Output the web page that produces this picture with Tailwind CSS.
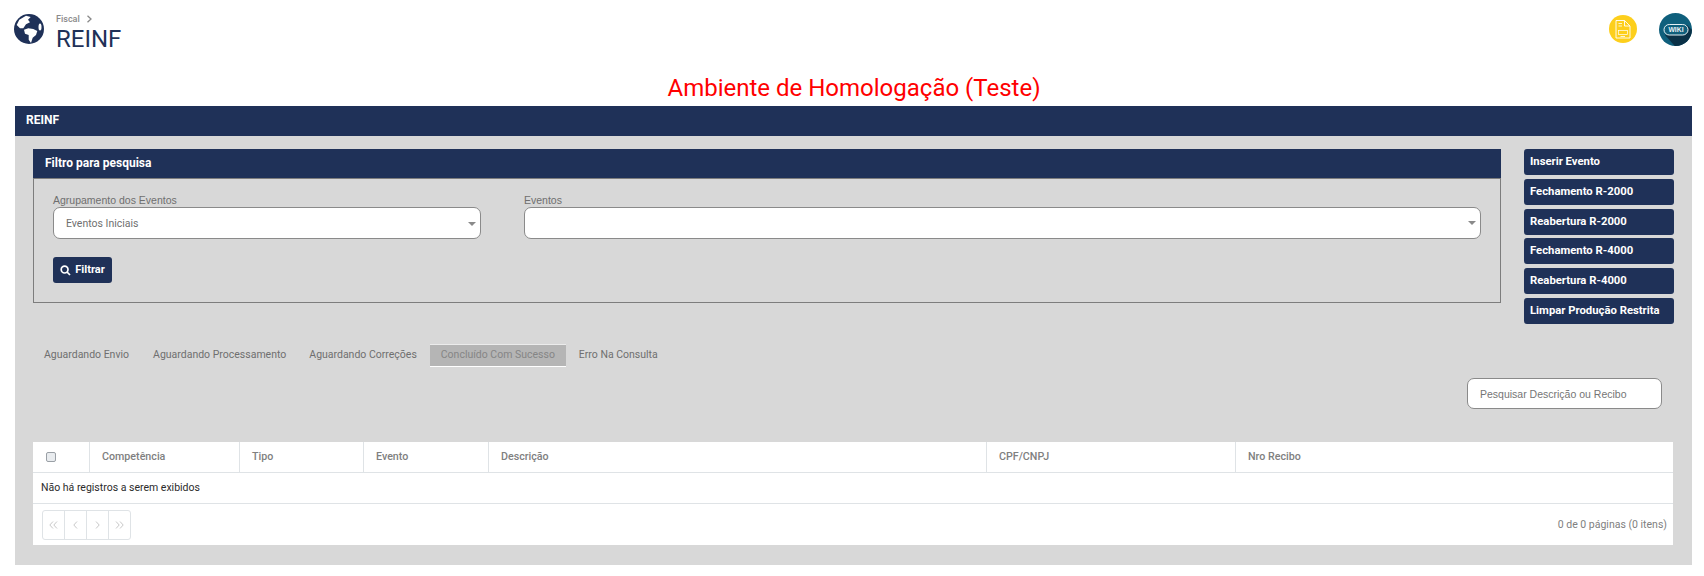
<!DOCTYPE html>
<html lang="pt-BR">
<head>
    <meta charset="UTF-8">
    <title>REINF</title>
    <script src="https://cdn.jsdelivr.net/npm/@tailwindcss/browser@4"></script>
</head>
<body class="bg-white font-['Roboto',sans-serif] h-[576px] overflow-hidden">
    <!-- topo -->
    <header class="h-[72px] flex justify-between pl-[14px] pr-[12px]">
        <div class="flex pt-[14px]">
            <svg class="w-[30px] h-[30px]" viewBox="0 0 30 30">
                <circle cx="15" cy="15" r="15" fill="#1f3158"/>
                <path d="M2.700 11 5.300 5.700 12 1.700 16.700 3 14 5.700 16 8.300 12 10.300 9.300 14.300 6 14.300Z" fill="#fff"/>
                <path d="M10 15.700 14.300 14.300 19.300 15 23.300 17 22 21 18.700 23.700 17 29 14.700 25.700 14.700 21 11 19.700Z" fill="#fff"/>
                <ellipse cx="26" cy="13" rx="1.500" ry="3.500" fill="#fff"/>
            </svg>
            <div class="ml-[12px] -mt-[2px]">
                <div class="flex items-center text-[9px] leading-[14px] text-[#8a8a8a] font-medium">Fiscal
                    <svg class="w-[7px] h-[8px] ml-[6px]" viewBox="0 0 7 8" fill="none" stroke="#8a8a8a" stroke-width="1.3"><path d="M1.5 .8 5 4 1.5 7.2"/></svg>
                </div>
                <h1 class="text-[24px] leading-[26px] text-[#1f3158]">REINF</h1>
            </div>
        </div>
        <div class="flex items-start pt-[15px] gap-[22px]">
            <svg class="w-[28px] h-[28px]" viewBox="0 0 28 28">
                <circle cx="14" cy="14" r="14" fill="#fdcf1c"/>
                <path d="M7 5.500H15.500L21 11V23H7ZM15.500 5.500V11H21" fill="none" stroke="#fff" stroke-width=".9"/>
                <rect x="9.500" y="15.500" width="9" height="4" fill="none" stroke="#fff" stroke-width=".7"/>
                <path d="M9.500 8.500H13M9.500 11H13M11.500 21.500H16" stroke="#fff" stroke-width=".8"/>
            </svg>
            <svg class="w-[33px] h-[33px] -mt-[2px]" viewBox="0 0 33 33">
                <clipPath id="wikiClip"><circle cx="16.500" cy="16.500" r="16.500"/></clipPath>
                <circle cx="16.500" cy="16.500" r="16.500" fill="#0f5f7c"/>
                <path d="M6 22 28 12 40 24 22 40Z" fill="#0a3147" clip-path="url(#wikiClip)"/>
                <rect x="5" y="11.500" width="24" height="10.500" rx="5.250" fill="#0f5f7c" stroke="#e6f0f4" stroke-width="1"/>
                <text x="17" y="19.200" text-anchor="middle" font-family="Liberation Sans" font-weight="700" font-size="6.800" fill="#e6f0f4">WIKI</text>
            </svg>
        </div>
    </header>

    <div class="h-[34px] pl-[4px] text-center text-[24px] leading-[32px] text-[#ff0000]">Ambiente de Homologação (Teste)</div>

    <main class="ml-[15px] mr-[12px] h-[459px] bg-[#d8d8d8]">
        <div class="h-[30px] bg-[#1f3158] pl-[11px] text-white text-[12px] font-bold leading-[29px]">REINF</div>

        <div class="flex pl-[18px] pr-[18px] pt-[13px]">
            <section class="w-[1468px] h-[154px] border border-t-0 border-[#7d7d7d]">
                <div class="h-[30px] -mx-px bg-[#1f3158] border-b border-[#7d7d7d] pl-[12px] text-white text-[12px] font-bold leading-[29px]">Filtro para pesquisa</div>
                <div class="flex pl-[19px] pt-[13px] gap-[43px]">
                    <div class="w-[428px]">
                        <label class="block pt-px text-[10.5px] leading-[14px] text-[#6f6f6f] font-['Liberation_Sans',sans-serif]">Agrupamento dos Eventos</label>
                        <div class="h-[32px] pt-px bg-white border border-[#8a8a8a] rounded-[7px] flex items-center justify-between pl-[12px] pr-[4px] text-[10.5px] text-[#6f6f6f]">
                            Eventos Iniciais
                            <span class="w-0 h-0 border-x-[4.5px] border-x-transparent border-t-[4px] border-t-[#8a8a8a]"></span>
                        </div>
                    </div>
                    <div class="w-[957px]">
                        <label class="block pt-px text-[10.5px] leading-[14px] text-[#6f6f6f] font-['Liberation_Sans',sans-serif]">Eventos</label>
                        <div class="h-[32px] bg-white border border-[#8a8a8a] rounded-[7px] flex items-center justify-end pr-[4px]">
                            <span class="w-0 h-0 border-x-[4.5px] border-x-transparent border-t-[4px] border-t-[#8a8a8a]"></span>
                        </div>
                    </div>
                </div>
                <button class="ml-[19px] mt-[18px] w-[59px] h-[26px] bg-[#1f3158] rounded-[3px] flex items-center justify-center gap-[4px] text-white text-[11px] font-bold">
                    <svg class="w-[11px] h-[11px]" viewBox="0 0 11 11" fill="none" stroke="#fff" stroke-width="1.7"><circle cx="4.6" cy="4.6" r="3.4"/><path d="M7 7 10 10"/></svg>
                    Filtrar
                </button>
            </section>
            <div class="ml-[23px] w-[150px] flex flex-col gap-[4px]">
                <button class="h-[26px] bg-[#1f3158] rounded-[3px] pl-[6px] text-left text-white text-[11.3px] font-bold whitespace-nowrap">Inserir Evento</button>
                <button class="h-[26px] bg-[#1f3158] rounded-[3px] pl-[6px] text-left text-white text-[11.3px] font-bold whitespace-nowrap">Fechamento R-2000</button>
                <button class="h-[26px] bg-[#1f3158] rounded-[3px] pl-[6px] text-left text-white text-[11.3px] font-bold whitespace-nowrap">Reabertura R-2000</button>
                <button class="h-[26px] -mt-px bg-[#1f3158] rounded-[3px] pl-[6px] text-left text-white text-[11.3px] font-bold whitespace-nowrap">Fechamento R-4000</button>
                <button class="h-[26px] bg-[#1f3158] rounded-[3px] pl-[6px] text-left text-white text-[11.3px] font-bold whitespace-nowrap">Reabertura R-4000</button>
                <button class="h-[26px] bg-[#1f3158] rounded-[3px] pl-[6px] text-left text-white text-[11.3px] font-bold whitespace-nowrap">Limpar Produção Restrita</button>
            </div>
        </div>

        <nav class="mt-[20px] ml-[18px] h-[23px] flex items-start leading-[22px] text-[10.5px] text-[#6f6f6f]">
            <span class="ml-[11px]">Aguardando Envio</span>
            <span class="ml-[24px]">Aguardando Processamento</span>
            <span class="ml-[23px]">Aguardando Correções</span>
            <span class="ml-[13px] w-[136px] h-[23px] leading-[20px] text-center bg-[#b5b5b5] text-[#858585] border-t border-b border-t-[#ececec] border-b-white">Concluído Com Sucesso</span>
            <span class="ml-[13px]">Erro Na Consulta</span>
        </nav>

        <div class="flex justify-end pr-[30px] pt-[11px]">
            <input placeholder="Pesquisar Descrição ou Recibo" class="w-[195px] h-[31px] bg-white border border-[#8a8a8a] rounded-[7px] pl-[12px] text-[10.5px] font-['Liberation_Sans',sans-serif] placeholder:text-[#757575]">
        </div>

        <div class="mt-[33px] ml-[18px] mr-[19px] bg-white text-[10.7px]">
            <div class="h-[31px] flex border-b border-[#dfe3e6] text-[#808080] font-medium">
                <div class="w-[57px] border-r border-[#dfe3e6] flex items-center pl-[13px]">
                    <span class="w-[10px] h-[10px] bg-[#e9ecef] border border-[#9aa0a6] rounded-[2px]"></span>
                </div>
                <div class="w-[150px] border-r border-[#dfe3e6] pl-[12px] leading-[29px]">Competência</div>
                <div class="w-[124px] border-r border-[#dfe3e6] pl-[12px] leading-[29px]">Tipo</div>
                <div class="w-[125px] border-r border-[#dfe3e6] pl-[12px] leading-[29px]">Evento</div>
                <div class="w-[498px] border-r border-[#dfe3e6] pl-[12px] leading-[29px]">Descrição</div>
                <div class="w-[249px] border-r border-[#dfe3e6] pl-[12px] leading-[29px]">CPF/CNPJ</div>
                <div class="flex-1 pl-[12px] leading-[29px]">Nro Recibo</div>
            </div>
            <div class="h-[31px] border-b border-[#dfe3e6] pl-[8px] leading-[29px] text-[10.5px] text-[#2b2b2b]">Não há registros a serem exibidos</div>
            <div class="h-[41px] flex justify-between items-start pl-[9px] pr-[6px] pt-[6px] text-[10.5px] text-[#808080]">
                <div class="h-[30px] w-[89px] flex border border-[#dfe3e6] rounded-[3px]">
                    <span class="flex-1 flex items-center justify-center border-r border-[#dfe3e6]">
                        <svg class="w-[9px] h-[8px]" viewBox="0 0 9 8" fill="none" stroke="#c8c8c8"><path d="M4 .5.8 4 4 7.5M8 .5 4.800 4 8 7.500"/></svg>
                    </span>
                    <span class="flex-1 flex items-center justify-center border-r border-[#dfe3e6]">
                        <svg class="w-[5px] h-[8px]" viewBox="0 0 5 8" fill="none" stroke="#c8c8c8"><path d="M4 .5.8 4 4 7.500"/></svg>
                    </span>
                    <span class="flex-1 flex items-center justify-center border-r border-[#dfe3e6]">
                        <svg class="w-[5px] h-[8px]" viewBox="0 0 5 8" fill="none" stroke="#c8c8c8"><path d="M1 .5 4.200 4 1 7.500"/></svg>
                    </span>
                    <span class="flex-1 flex items-center justify-center">
                        <svg class="w-[9px] h-[8px]" viewBox="0 0 9 8" fill="none" stroke="#c8c8c8"><path d="M1 .5 4.200 4 1 7.500M5 .5 8.200 4 5 7.500"/></svg>
                    </span>
                </div>
                <span class="leading-[30px]">0 de 0 páginas (0 itens)</span>
            </div>
        </div>
    </main>
</body>
</html>
